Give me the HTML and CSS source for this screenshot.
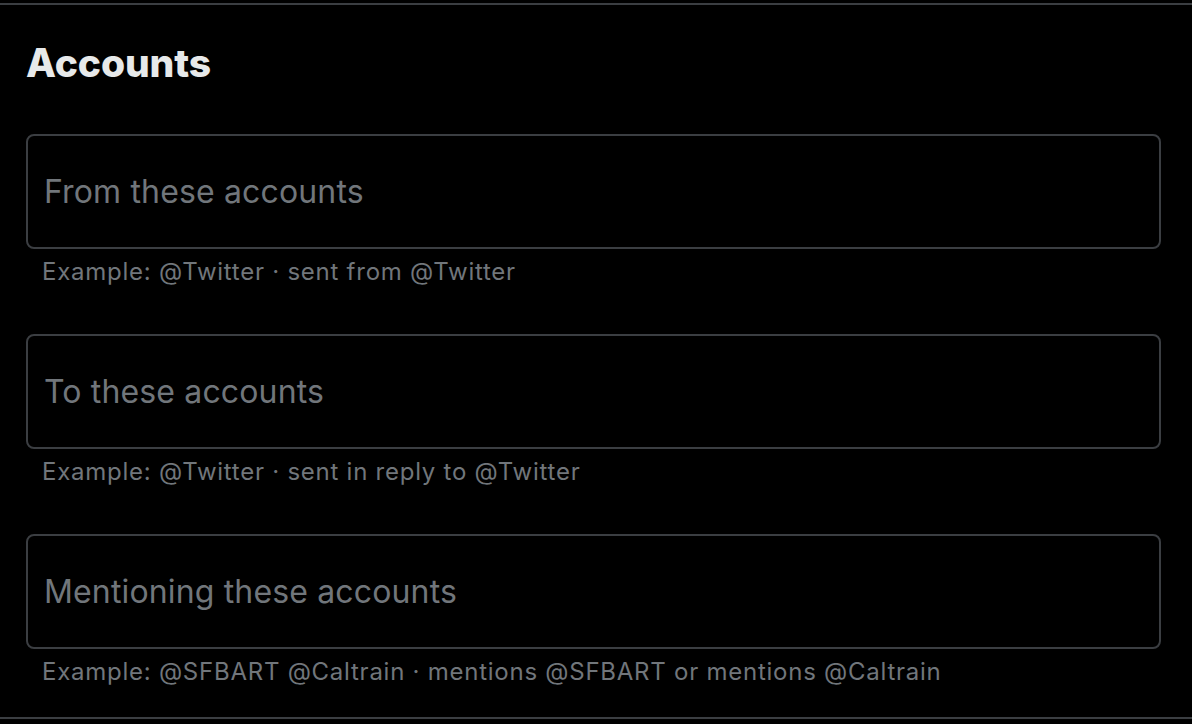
FILE: index.html
```html
<!DOCTYPE html>
<html lang="en">
<head>
    <meta charset="UTF-8">
    <meta name="viewport" content="width=device-width, initial-scale=1.0">
    <title>Advanced search - Accounts</title>
    <link rel="stylesheet" href="styles.css">
</head>
<body>
    <div class="rule rule-top"></div>

    <section class="accounts">
        <h2>Accounts</h2>

        <div class="field">
            <input type="text" class="field-input" placeholder="From these accounts">
            <p class="hint">Example: @Twitter · sent from @Twitter</p>
        </div>

        <div class="field">
            <input type="text" class="field-input" placeholder="To these accounts">
            <p class="hint">Example: @Twitter · sent in reply to @Twitter</p>
        </div>

        <div class="field">
            <input type="text" class="field-input" placeholder="Mentioning these accounts">
            <p class="hint">Example: @SFBART @Caltrain · mentions @SFBART or mentions @Caltrain</p>
        </div>
    </section>

    <div class="rule"></div>
</body>
</html>
```

FILE: styles.css
```css
body {
    margin: 0;
    background: #000;
    color: #e7e9ea;
    font-family: Inter, "Noto Sans", sans-serif;
    overflow: hidden;
}
.rule {
    height: 2px;
    background: #3b3e42;
}
.rule-top {
    margin-top: 3px;
}
.accounts {
    padding: 34px 31px 0 26px;
    height: 712px;
    box-sizing: border-box;
}
h2 {
    margin: 0 0 0 0;
    font-size: 39px;
    font-weight: 800;
    line-height: 48px;
    letter-spacing: -0.1px;
}
.field {
    margin-top: 47px;
}
.field + .field {
    margin-top: 48px;
}
.field-input {
    display: block;
    width: 100%;
    height: 115px;
    box-sizing: border-box;
    padding: 0 16px;
    background: #000;
    border: 2px solid #3b3e42;
    border-radius: 8px;
    color: #e7e9ea;
    font-family: Inter, "Noto Sans", sans-serif;
    font-size: 32px;
    letter-spacing: 0.15px;
    outline: none;
}
.field-input::placeholder {
    color: #71767b;
}
.hint {
    margin: 8px 0 0 16px;
    color: #71767b;
    font-size: 24px;
    line-height: 29px;
    letter-spacing: 0.75px;
}
```
